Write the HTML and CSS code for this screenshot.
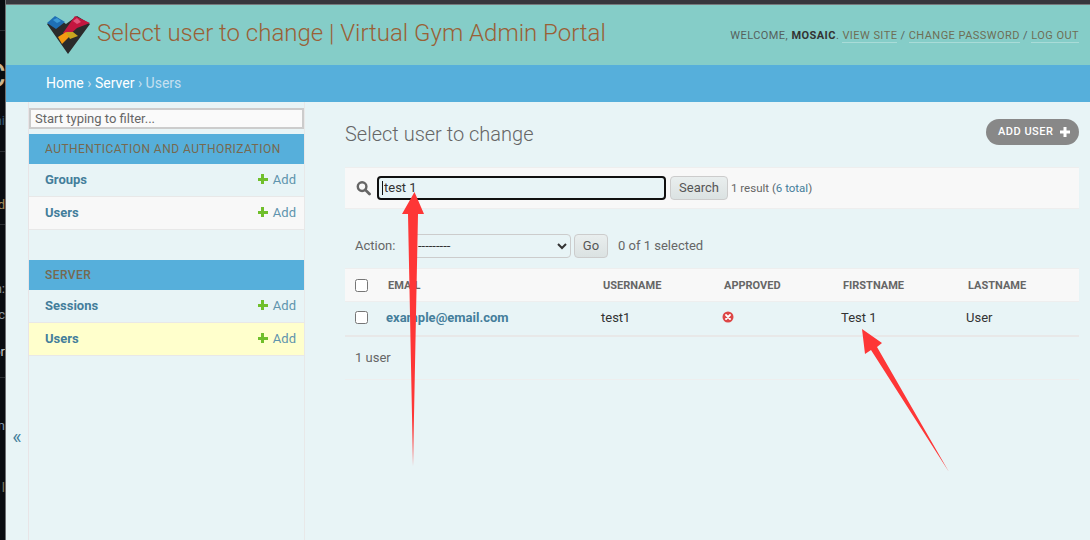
FILE: index.html
```html
<!DOCTYPE html>
<html lang="en">
<head>
  <meta charset="UTF-8" />
  <meta name="viewport" content="width=device-width, initial-scale=1.0"/>
  <title>Select user to change | Virtual Gym Admin Portal</title>
  <link rel="stylesheet" href="styles.css">
</head>
<body>
  <div class="edge">
    <span class="edge-line line-a"></span>
    <span class="edge-line line-b"></span>
    <span class="edge-line line-c"></span>
    <span class="edge-line line-d"></span>
    <span class="edge-glyph glyph-big">C</span>
    <span class="edge-glyph glyph-a">ni</span>
    <span class="edge-glyph glyph-b">d</span>
    <span class="edge-glyph glyph-c">n:</span>
    <span class="edge-glyph glyph-d">c</span>
    <span class="edge-glyph glyph-e">or</span>
    <span class="edge-glyph glyph-f">n</span>
    <span class="edge-glyph glyph-g">l</span>
  </div>

  <div class="page">
    <div class="topline"></div>

    <header class="header">
      <div class="branding">
        <svg class="logo" viewBox="47 15 44 40" width="44" height="40">
          <polygon fill="#2b2b2b" points="47,24 56,17 66,24 77,16 90,24 68,54"/>
          <polygon fill="#1f6fb5" points="47,23 55,16 65,22 56,29"/>
          <polygon fill="#3d9ad6" points="53,20 57,18 61,21 57,23"/>
          <polygon fill="#c4163f" points="63,33 75,16 90,23 77,28 68,36"/>
          <polygon fill="#e2557a" points="73,21 77,18 81,22 77,24"/>
          <polygon fill="#f59a11" points="58,37 66,32 70,36 62,44"/>
          <polygon fill="#c9a51f" points="66,32 73,32 78,36 70,39"/>
        </svg>
        <h1 class="site-title">Select user to change | Virtual Gym Admin Portal</h1>
      </div>
      <div class="user-tools">
        Welcome, <strong>Mosaic</strong>.
        <a href="#">View site</a> /
        <a href="#">Change password</a> /
        <a href="#">Log out</a>
      </div>
    </header>

    <nav class="breadcrumbs">
      <a href="#">Home</a><span class="sep">›</span><a href="#">Server</a><span class="sep">›</span><span class="crumb-current">Users</span>
    </nav>

    <main class="main">
      <div class="toggle">«</div>

      <aside class="sidebar">
        <input class="nav-filter" type="text" placeholder="Start typing to filter...">

        <div class="app-module">
          <div class="caption">Authentication and Authorization</div>
          <div class="model-row"><a class="model-link" href="#">Groups</a><a class="add-link" href="#"><span class="plus"></span>Add</a></div>
          <div class="model-row row-alt"><a class="model-link" href="#">Users</a><a class="add-link" href="#"><span class="plus"></span>Add</a></div>
        </div>

        <div class="app-module">
          <div class="caption caption-strong">Server</div>
          <div class="model-row"><a class="model-link" href="#">Sessions</a><a class="add-link" href="#"><span class="plus"></span>Add</a></div>
          <div class="model-row row-current"><a class="model-link" href="#">Users</a><a class="add-link" href="#"><span class="plus"></span>Add</a></div>
        </div>
      </aside>

      <section class="content">
        <div class="content-head">
          <h2 class="content-title">Select user to change</h2>
          <a class="add-user" href="#">Add user
            <svg viewBox="0 0 12 12" width="12" height="12"><path fill="#fff" d="M4.5 1h3v3.5H11v3H7.5V11h-3V7.5H1v-3h3.5z"/></svg>
          </a>
        </div>

        <div class="search-bar">
          <svg class="search-icon" viewBox="0 0 16 16" width="16" height="16"><circle cx="6.5" cy="6.5" r="4.6" fill="none" stroke="#666" stroke-width="2.6"/><path d="M10 10l4.4 4.4" stroke="#666" stroke-width="3" stroke-linecap="round"/></svg>
          <div class="search-field">
            <input class="search-input" type="text" value="test 1">
            <span class="caret"></span>
          </div>
          <button class="btn search-btn" type="button">Search</button>
          <span class="small-note">1 result (<a href="#">6 total</a>)</span>
        </div>

        <div class="actions">
          <label class="action-label">Action:</label>
          <select class="action-select"><option>---------</option></select>
          <button class="btn go-btn" type="button">Go</button>
          <span class="selected-note">0 of 1 selected</span>
        </div>

        <table class="results">
          <thead>
            <tr>
              <th class="col-check"><input type="checkbox"></th>
              <th class="col-email">Email</th>
              <th class="col-username">Username</th>
              <th class="col-approved">Approved</th>
              <th class="col-first">Firstname</th>
              <th class="col-last">Lastname</th>
            </tr>
          </thead>
          <tbody>
            <tr>
              <td><input type="checkbox"></td>
              <td><a class="row-link" href="#">example@email.com</a></td>
              <td>test1</td>
              <td>
                <svg class="no-icon" viewBox="0 0 12 12" width="12" height="12"><circle cx="6" cy="6" r="5.5" fill="#dd4646"/><path d="M4 4l4 4M8 4l-4 4" stroke="#fff" stroke-width="1.8" stroke-linecap="round"/></svg>
              </td>
              <td>Test 1</td>
              <td>User</td>
            </tr>
          </tbody>
        </table>

        <p class="paginator">1 user</p>
      </section>
    </main>
  </div>

  <svg class="arrows" viewBox="0 0 1090 540" width="1090" height="540">
    <polygon fill="#fe3636" points="414.5,192 424,214 418,214 413,466 408,214 402,214"/>
    <polygon fill="#fe3636" points="862,329 882,343 877,347 949,472 871,350 865,354"/>
  </svg>
</body>
</html>
```

FILE: styles.css
```css
* {
  box-sizing: border-box;
}
html, body {
  height: 100%;
}
body {
  margin: 0;
  display: flex;
  height: 540px;
  overflow: hidden;
  background: #e8f4f6;
  font-family: Roboto, 'Liberation Sans', sans-serif;
  font-size: 14px;
  color: #333;
}
a {
  text-decoration: none;
}

/* sliver of the window behind */
.edge {
  position: relative;
  flex: none;
  width: 6px;
  overflow: hidden;
  background: #090c11;
  border-right: 1px solid #6d6f72;
}
.edge-line {
  position: absolute;
  left: 0;
  width: 5px;
  height: 1px;
  background: #2b2e33;
}
.line-a { top: 30px; }
.line-b { top: 151px; }
.line-c { top: 224px; }
.line-d { top: 377px; }
.edge-glyph {
  position: absolute;
  right: 0;
  font-size: 13px;
  line-height: 16px;
  color: #8a95a0;
}
.glyph-big { top: 55px; right: -1px; font-size: 34px; line-height: 40px; color: #c9b48f; }
.glyph-a { top: 113px; color: #35597a; }
.glyph-b { top: 197px; color: #a38a5c; }
.glyph-c { top: 281px; }
.glyph-d { top: 307px; }
.glyph-e { top: 344px; color: #c4ccd4; }
.glyph-f { top: 418px; color: #7f96ad; }
.glyph-g { top: 480px; color: #7d7a64; }

.page {
  flex: 1;
  display: flex;
  flex-direction: column;
  min-width: 0;
}
.topline {
  flex: none;
  height: 5px;
  background: #37373d;
  border-bottom: 1px solid #77797c;
}

.header {
  flex: none;
  height: 60px;
  display: flex;
  align-items: center;
  justify-content: space-between;
  padding: 0 11px 0 41px;
  background: #85cdc8;
}
.branding {
  display: flex;
  align-items: center;
  gap: 6px;
}
.logo {
  display: block;
}
.site-title {
  margin: 0;
  padding-bottom: 4px;
  font-size: 24px;
  font-weight: 300;
  color: #9a6036;
}
.user-tools {
  font-size: 11px;
  letter-spacing: 0.45px;
  text-transform: uppercase;
  color: #55605c;
}
.user-tools strong {
  color: #333;
  font-weight: 700;
}
.user-tools a {
  color: #6e6e55;
  border-bottom: 1px solid rgba(255, 255, 255, 0.3);
}

.breadcrumbs {
  flex: none;
  height: 37px;
  display: flex;
  align-items: center;
  padding: 0 0 2px 40px;
  background: #56afdb;
  color: #c6e0f0;
}
.breadcrumbs a {
  color: #fff;
}
.sep {
  padding: 0 3.5px;
}

.main {
  flex: 1;
  display: flex;
  min-height: 0;
}
.toggle {
  flex: none;
  width: 22px;
  display: flex;
  align-items: center;
  justify-content: center;
  padding-top: 232px;
  font-size: 20px;
  color: #447e9b;
}

.sidebar {
  flex: none;
  width: 277px;
  padding-top: 6px;
  border-left: 1px solid #e8e4e6;
  border-right: 1px solid #e8e8e8;
}
.nav-filter {
  display: block;
  width: 100%;
  height: 21px;
  padding: 0 4px;
  margin-bottom: 5px;
  border: 2px solid #ccc;
  background: #fafafa;
  font-family: inherit;
  font-size: 13px;
  color: #666;
}
.nav-filter::placeholder {
  color: #666;
  opacity: 1;
}
.app-module {
  margin-bottom: 30px;
}
.caption {
  height: 30px;
  display: flex;
  align-items: center;
  padding-left: 16px;
  background: #56afdb;
  font-size: 12px;
  letter-spacing: 0.46px;
  text-transform: uppercase;
  color: #76694f;
}
.caption-strong {
  font-weight: 500;
}
.model-row {
  height: 33px;
  display: flex;
  align-items: center;
  justify-content: space-between;
  padding: 0 8px 2px 16px;
  border-bottom: 1px solid #e8e8e8;
  font-size: 13px;
}
.row-alt {
  background: #f8f8f8;
}
.row-current {
  background: #ffc;
}
.model-link {
  font-weight: 700;
  color: #447e9b;
}
.add-link {
  display: flex;
  align-items: center;
  gap: 5px;
  color: #5f94ad;
}
.plus {
  position: relative;
  width: 10px;
  height: 10px;
  background:
    linear-gradient(#70bf2b, #70bf2b) center / 10px 3px no-repeat,
    linear-gradient(#70bf2b, #70bf2b) center / 3px 10px no-repeat;
}

.content {
  flex: 1;
  min-width: 0;
  padding: 0 11px 0 40px;
}
.content-head {
  height: 65px;
  display: flex;
  justify-content: space-between;
  align-items: flex-start;
}
.content-title {
  margin: 20px 0 0;
  font-size: 20px;
  font-weight: 300;
  color: #666;
}
.add-user {
  margin-top: 17px;
  height: 26px;
  width: 93px;
  display: flex;
  align-items: center;
  gap: 6px;
  padding: 0 0 1px 12px;
  border-radius: 15px;
  background: #888;
  font-size: 11px;
  font-weight: 500;
  letter-spacing: 0.5px;
  text-transform: uppercase;
  color: #fff;
}

.search-bar {
  height: 42px;
  display: flex;
  align-items: center;
  padding: 0 0 1px 11px;
  background: #f8f8f8;
  border-top: 1px solid #eee;
  border-bottom: 1px solid #eee;
}
.search-field {
  position: relative;
  margin-left: 6px;
}
.search-icon {
  display: block;
  flex: none;
  width: 15px;
}
.search-input {
  display: block;
  width: 289px;
  height: 24px;
  padding: 0 5px;
  border: 2px solid #101010;
  border-radius: 4px;
  background: #e8f4f6;
  outline: none;
  font-family: inherit;
  font-size: 13px;
  color: #333;
}
.caret {
  position: absolute;
  left: 5px;
  top: 5px;
  width: 1px;
  height: 14px;
  background: #111;
}
.btn {
  height: 24px;
  border: 1px solid #ccc;
  border-radius: 4px;
  background: linear-gradient(#e9eeee, #dbe2e2);
  font-family: inherit;
  font-size: 13px;
  color: #555;
}
.search-btn {
  width: 58px;
  margin-left: 4px;
  padding: 0;
}
.small-note {
  margin-left: 3px;
  font-size: 11.5px;
  color: #666;
}
.small-note a {
  color: #447e9b;
}

.actions {
  height: 59px;
  display: flex;
  align-items: center;
  padding: 14px 0 0 10px;
  font-size: 13px;
  color: #666;
}
.action-label {
  width: 54px;
}
.action-select {
  width: 162px;
  height: 24px;
  padding: 0 4px;
  border: 1px solid #ccc;
  border-radius: 4px;
  background: #e8f4f6;
  font-family: inherit;
  font-size: 13px;
  color: #333;
}
.go-btn {
  width: 34px;
  margin-left: 3px;
  padding: 0;
}
.selected-note {
  margin-left: 10px;
}

.results {
  width: 734px;
  table-layout: fixed;
  border-collapse: collapse;
}
.results th {
  height: 33px;
  padding: 0 12px;
  background: #f8f8f8;
  border-top: 1px solid #eee;
  border-bottom: 1px solid #eee;
  text-align: left;
  font-size: 11px;
  font-weight: 700;
  text-transform: uppercase;
  color: #666;
}
.results td {
  height: 34px;
  padding: 0 10px 2px;
  border-bottom: 2px solid #e8e8e8;
  font-size: 13px;
  color: #333;
}
.results input[type="checkbox"] {
  display: block;
  margin: 0;
}
.results th.col-check {
  padding: 0 0 0 10px;
}
.col-check { width: 31px; }
.col-email { width: 215px; }
.col-username { width: 121px; }
.col-approved { width: 119px; }
.col-first { width: 125px; }
.col-last { width: 123px; }
.row-link {
  font-weight: 700;
  color: #447e9b;
}
.no-icon {
  display: block;
}

.paginator {
  margin: 0;
  height: 43px;
  display: flex;
  align-items: center;
  padding: 0 0 0 10px;
  border-bottom: 1px solid #eee;
  font-size: 13px;
  color: #666;
}

/* screenshot annotations on top of the page */
.arrows {
  position: absolute;
  left: 0;
  top: 0;
  pointer-events: none;
}
```
